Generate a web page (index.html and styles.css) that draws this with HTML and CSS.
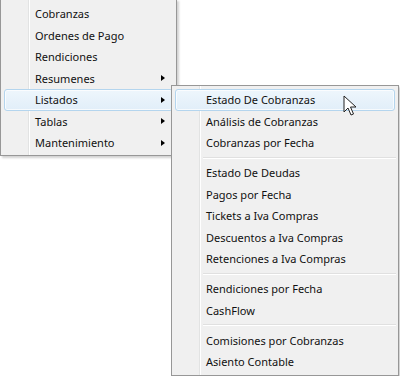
FILE: index.html
```html
<!DOCTYPE html>
<html lang="es">
  <head>
    <meta charset="UTF-8" />
    <title>Menu</title>
    <link rel="stylesheet" href="styles.css">
  </head>
  <body>
    <div class="desk">
      <ul class="menu main">
        <li class="item">Cobranzas</li>
        <li class="item">Ordenes de Pago</li>
        <li class="item">Rendiciones</li>
        <li class="item sub">Resumenes</li>
        <li class="item sub open">Listados</li>
        <li class="item sub">Tablas</li>
        <li class="item sub">Mantenimiento</li>
      </ul>

      <ul class="menu submenu">
        <li class="item hot">Estado De Cobranzas</li>
        <li class="item">Análisis de Cobranzas</li>
        <li class="item">Cobranzas por Fecha</li>
        <li class="sep"></li>
        <li class="item">Estado De Deudas</li>
        <li class="item">Pagos por Fecha</li>
        <li class="item">Tickets a Iva Compras</li>
        <li class="item">Descuentos a Iva Compras</li>
        <li class="item">Retenciones a Iva Compras</li>
        <li class="sep"></li>
        <li class="item">Rendiciones por Fecha</li>
        <li class="item">CashFlow</li>
        <li class="sep"></li>
        <li class="item">Comisiones por Cobranzas</li>
        <li class="item">Asiento Contable</li>
      </ul>

      <svg class="cursor" width="14" height="22" viewBox="0 0 14 22">
        <path d="M1 1 L1 17 L5 13 L8 20 L10.5 19 L7.5 12 L13 12 Z" fill="#fff" stroke="#222" stroke-width="1" stroke-linejoin="round"/>
      </svg>
    </div>
  </body>
</html>
```

FILE: styles.css
```css
body {
  margin: 0;
  background: #ffffff;
  font-family: "Noto Sans", "Open Sans", Arial, sans-serif;
  font-size: 11px;
  color: #111111;
}

.desk {
  position: relative;
  width: 400px;
  height: 376px;
  overflow: hidden;
}

.menu {
  list-style: none;
  margin: 0;
  padding: 3px 2px;
  background-color: #f0f0f0;
  border: 1px solid #979797;
  box-sizing: border-box;
  /* gutter line */
  background-image: linear-gradient(to right,
    transparent 27px, #e2e3e3 27px, #e2e3e3 28px, #ffffff 28px, #ffffff 29px, transparent 29px);
}

.main {
  width: 177px;
  height: 157px;
  margin-top: -1px;
  padding-top: 3px;
  box-shadow: 2px 2px 2px rgba(0, 0, 0, 0.18);
}

.submenu {
  position: absolute;
  left: 171px;
  top: 85px;
  width: 228px;
  height: 291px;
  box-shadow: 2px 2px 2px rgba(0, 0, 0, 0.18);
}

.item {
  position: relative;
  height: 21.5px;
  line-height: 20px;
  padding-left: 30px;
  border: 1px solid transparent;
  margin: 0 1px;
  border-radius: 3px;
  box-sizing: border-box;
  white-space: nowrap;
}

.sub::after {
  content: "";
  position: absolute;
  right: 7px;
  top: 6.5px;
  border-left: 4px solid #000;
  border-top: 3.5px solid transparent;
  border-bottom: 3.5px solid transparent;
}

.open,
.hot {
  border-color: #b4d5ee;
  background: linear-gradient(to bottom, #eef6fc, #e1eef9);
  box-shadow: inset 0 0 0 1px rgba(255, 255, 255, 0.7);
}

.sep {
  height: 8.5px;
  margin-left: 29px;
  background: linear-gradient(to bottom,
    transparent 3px, #e0e0e0 3px, #e0e0e0 4px, #ffffff 4px, #ffffff 5px, transparent 5px);
}

.cursor {
  position: absolute;
  left: 343px;
  top: 95px;
}
```
